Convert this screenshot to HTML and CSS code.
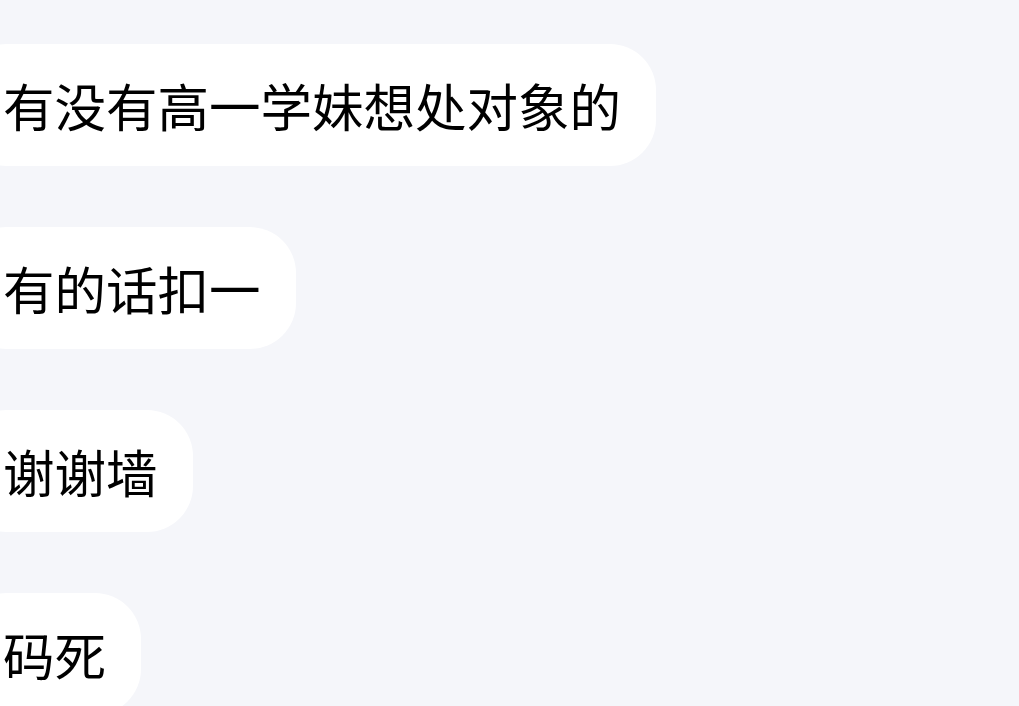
FILE: index.html
```html
<!DOCTYPE html>
<html lang="zh-CN">
<head>
<meta charset="utf-8">
<link rel="stylesheet" href="styles.css">
</head>
<body>
<div class="chat">
  <div class="bubble">有没有高一学妹想处对象的</div>
  <div class="bubble">有的话扣一</div>
  <div class="bubble">谢谢墙</div>
  <div class="bubble">码死</div>
</div>
</body>
</html>
```
FILE: styles.css
```css
html, body {
  margin: 0;
  padding: 0;
  background: #f5f6fa;
  overflow: hidden;
}
.chat {
  display: flex;
  flex-direction: column;
  align-items: flex-start;
  gap: 61px;
  padding-top: 44px;
}
.bubble {
  background: #ffffff;
  color: #000000;
  font-family: "Noto Sans CJK SC", "Noto Sans", sans-serif;
  font-size: 51.5px;
  line-height: 52px;
  padding: 35px 35px 35px 43px;
  margin-left: -40px;
  border-radius: 46px;
  white-space: nowrap;
}
```
